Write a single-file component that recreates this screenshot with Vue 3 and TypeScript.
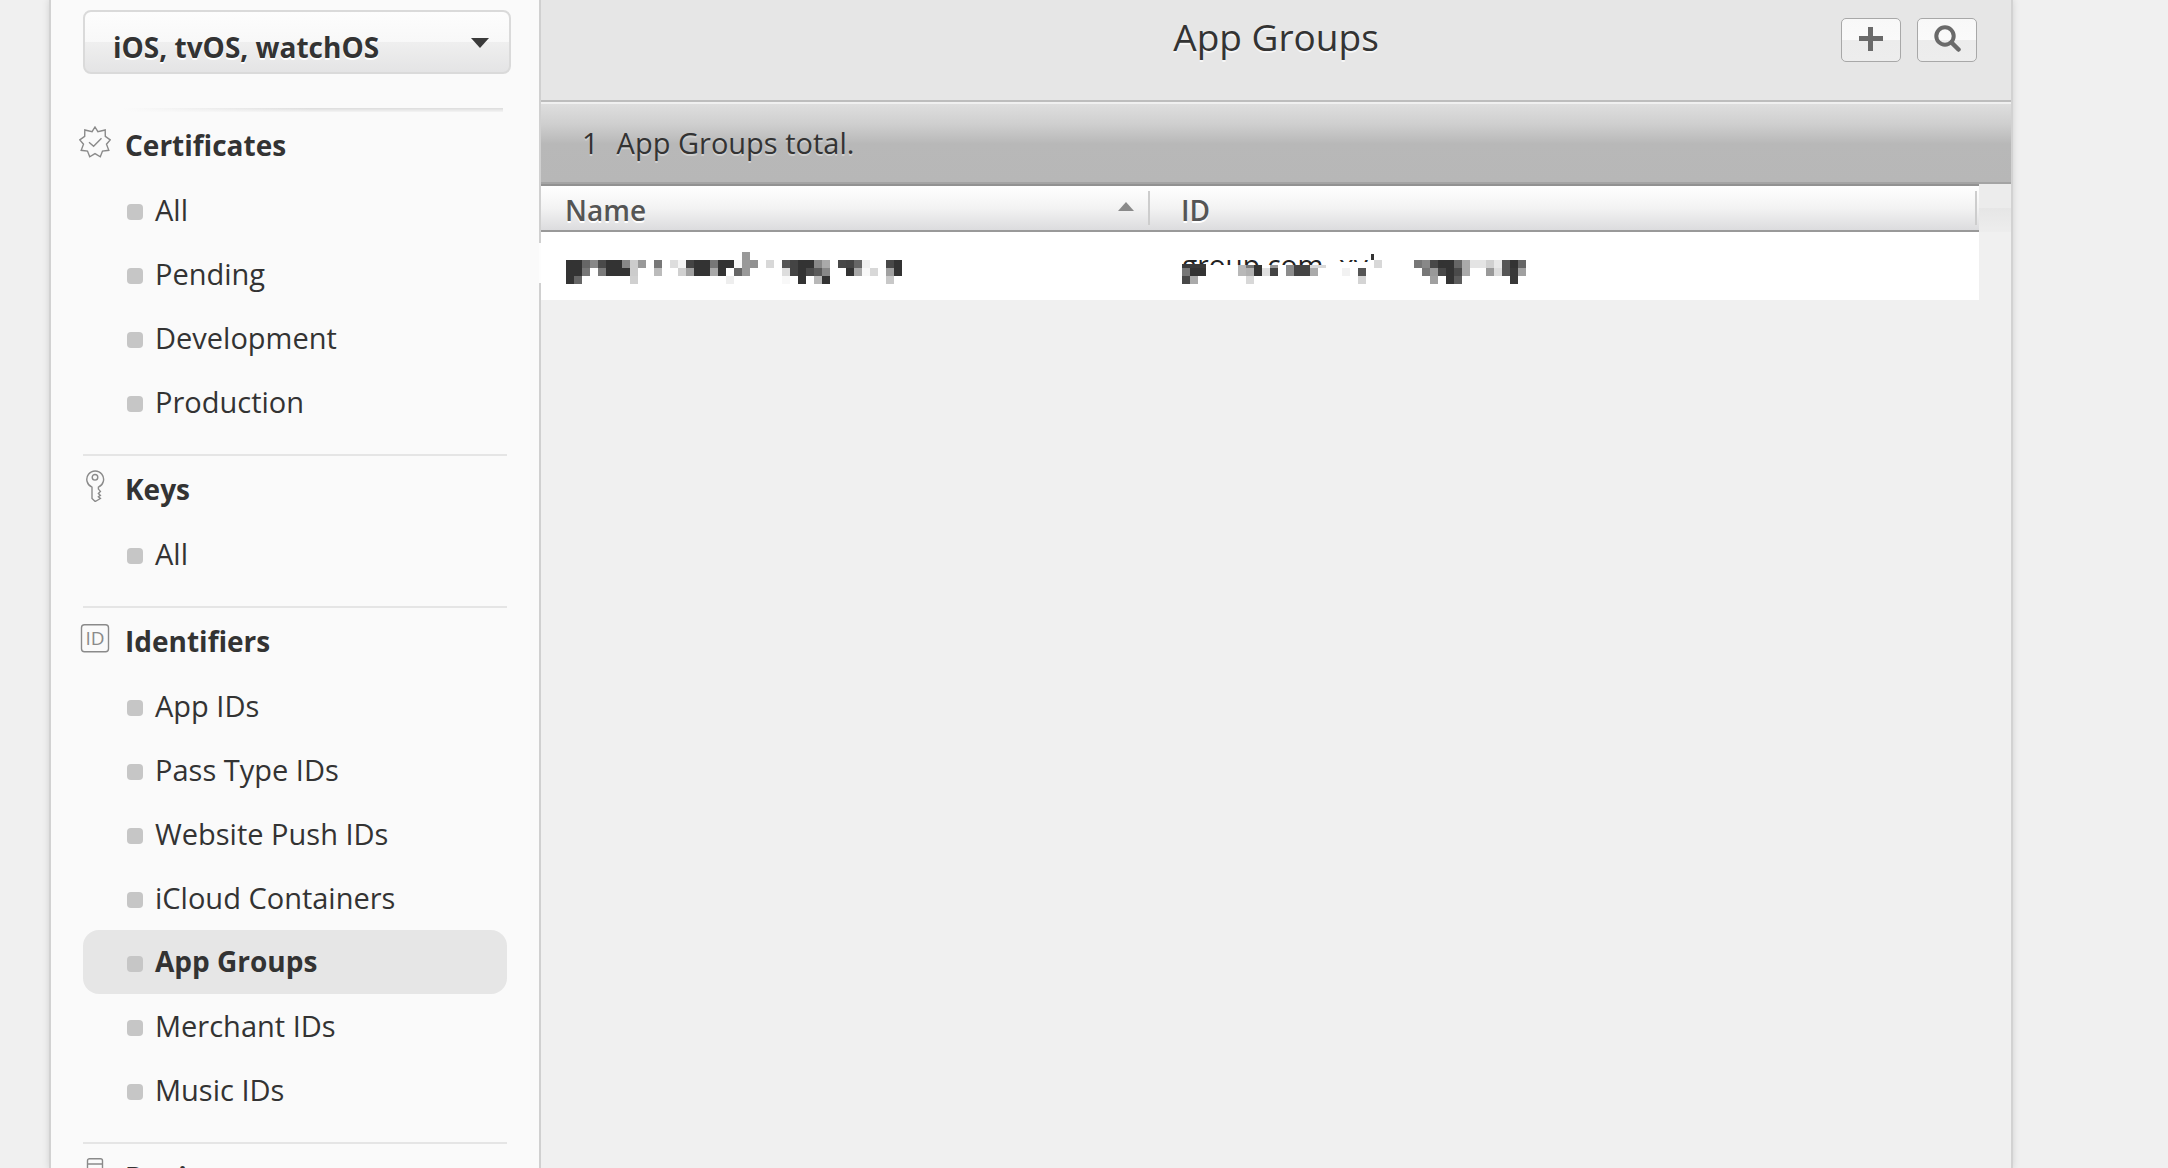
<script setup lang="ts">
import { ref } from 'vue'

type Icon = 'seal' | 'key' | 'id' | 'device'

interface Section {
  title: string
  icon: Icon
  items: string[]
}

interface Block {
  x: number
  y: number
  w: number
  h: number
  fill: string
}

const platform = ref('iOS, tvOS, watchOS')
const active = ref('Identifiers/App Groups')

const sections: Section[] = [
  { title: 'Certificates', icon: 'seal', items: ['All', 'Pending', 'Development', 'Production'] },
  { title: 'Keys', icon: 'key', items: ['All'] },
  {
    title: 'Identifiers',
    icon: 'id',
    items: [
      'App IDs',
      'Pass Type IDs',
      'Website Push IDs',
      'iCloud Containers',
      'App Groups',
      'Merchant IDs',
      'Music IDs',
    ],
  },
  { title: 'Devices', icon: 'device', items: ['All'] },
]

const CELL = 8

// Each row is a list of "column:shade" pairs; the shade is a two-digit grey level in hex.
function mosaic(rows: string[], left = 0): Block[] {
  return rows.flatMap((row, r) =>
    row
      .split(' ')
      .filter(Boolean)
      .map((pair) => {
        const [col, shade] = pair.split(':')
        return { x: left + Number(col) * CELL, y: r * CELL, w: CELL, h: CELL, fill: '#' + shade.repeat(3) }
      }),
  )
}

const nameBlocks = mosaic([
  '22:99',
  '0:33 1:33 2:66 3:88 4:4a 5:33 6:33 7:88 8:cc 9:99 11:77 13:dd 14:f5 15:44 16:33 17:33 18:77 19:33 20:33 21:f8 22:99 23:91 25:d8 27:55 28:44 29:33 30:33 31:88 32:aa 34:48 35:44 36:66 37:f0 40:48 41:33',
  '0:33 1:33 2:77 4:7a 5:33 6:33 7:33 8:cc 11:bb 14:d0 15:a0 16:33 17:33 18:a8 19:33 21:66 22:99 27:dd 28:44 29:33 30:4a 31:5a 32:88 35:33 36:a8 37:f8 38:d8 40:a0 41:33',
  '0:33 1:66 8:d0 20:ee 27:f8 29:33 31:b8 32:33 40:c8',
])

const idBlocks: Block[] = [
  { x: 0, y: 12, w: 24, h: 4, fill: '#3a3a3a' },
  { x: 0, y: 16, w: 8, h: 8, fill: '#777' },
  { x: 8, y: 16, w: 16, h: 8, fill: '#333' },
  { x: 0, y: 24, w: 8, h: 8, fill: '#484848' },
  { x: 8, y: 24, w: 8, h: 8, fill: '#aaa' },
  { x: 56, y: 13, w: 8, h: 11, fill: '#b8b8b8' },
  { x: 64, y: 13, w: 8, h: 3, fill: '#777' },
  { x: 64, y: 16, w: 8, h: 8, fill: '#b0b0b0' },
  { x: 72, y: 13, w: 8, h: 11, fill: '#333' },
  { x: 80, y: 16, w: 8, h: 8, fill: '#e0e0e0' },
  { x: 88, y: 13, w: 8, h: 3, fill: '#999' },
  { x: 88, y: 16, w: 8, h: 8, fill: '#444' },
  { x: 64, y: 24, w: 8, h: 8, fill: '#d8d8d8' },
  { x: 104, y: 13, w: 8, h: 11, fill: '#8c8c8c' },
  { x: 112, y: 13, w: 16, h: 11, fill: '#444' },
  { x: 128, y: 16, w: 8, h: 8, fill: '#aaa' },
  { x: 128, y: 13, w: 16, h: 3, fill: '#d8d8d8' },
  { x: 160, y: 16, w: 8, h: 8, fill: '#f2f2f2' },
  { x: 176, y: 16, w: 8, h: 8, fill: '#555' },
  { x: 176, y: 24, w: 8, h: 8, fill: '#d4d4d4' },
  { x: 189, y: 2, w: 3, h: 6, fill: '#333' },
  { x: 192, y: 8, w: 8, h: 8, fill: '#d8d8d8' },
  ...mosaic(
    [
      '',
      '0:77 1:88 2:48 3:33 4:33 5:66 6:aa 7:e4 8:e4 9:d0 10:e8 11:55 12:33 13:66',
      '1:77 2:99 3:48 4:33 5:4a 6:aa 9:99 10:dd 11:55 12:38 13:a0',
      '2:a0 4:33 5:5c 12:38',
    ],
    232,
  ),
]
</script>

<template>
  <div class="shell">
    <aside class="sidebar">
      <div class="picker">
        <select v-model="platform" aria-label="Platform">
          <option>iOS, tvOS, watchOS</option>
          <option>macOS</option>
        </select>
        <svg class="caret" width="18" height="10" viewBox="0 0 18 10" aria-hidden="true">
          <path d="M0 0h18L9 10z" fill="#3a3a3a" />
        </svg>
      </div>
      <div class="fade-rule"></div>

      <nav>
        <section v-for="s in sections" :key="s.title" class="group">
          <h2>
            <svg class="icon" width="32" height="32" viewBox="0 0 32 32" fill="none" stroke="#8a8a8a" stroke-width="1.4" aria-hidden="true">
              <template v-if="s.icon === 'seal'">
                <path d="M16 1l2.900 4.700 7.300-1.700.1 6.300 4.900 3.600-3.700 4.300 2.300 6.100-6.300.8-2.200 5.700L16 27.600l-5.300 3.200-2.200-5.700-6.300-.8 2.300-6.100L.8 13.900l4.900-3.600.1-6.300 7.300 1.700z" />
                <path d="M10 16.300l4.600 4 7.900-8" />
              </template>
              <template v-else-if="s.icon === 'key'">
                <path d="M13 17.100a8.400 8.400 0 1 1 6.400 0v2l2 2.300-2 2 2 2-2 1.400 2 1.700-5.200 3-3.200-3z" />
                <circle cx="16" cy="7.300" r="2.800" />
              </template>
              <template v-else-if="s.icon === 'id'">
                <rect x="2.500" y="2.700" width="27" height="27" rx="3" />
                <text x="16" y="23" text-anchor="middle" class="glyph">ID</text>
              </template>
              <template v-else>
                <rect x="8.500" y="0.700" width="15" height="30" rx="2" />
                <path d="M8.500 6h15M8.500 26h15" />
              </template>
            </svg>
            {{ s.title }}
          </h2>
          <ul>
            <li v-for="item in s.items" :key="item">
              <a
                href="#"
                :class="{ active: active === s.title + '/' + item }"
                @click.prevent="active = s.title + '/' + item"
                >{{ item }}</a
              >
            </li>
          </ul>
        </section>
      </nav>
      <span class="notch"></span>
    </aside>

    <main>
      <header>
        <h1>App Groups</h1>
        <div class="actions">
          <button type="button" aria-label="Add">
            <svg width="24" height="24" viewBox="0 0 24 24"><path d="M9 0h5v9h10v5H14v10H9V14H0V9h9z" fill="#6a6a6a" /></svg>
          </button>
          <button type="button" aria-label="Search">
            <svg width="28" height="28" viewBox="0 0 28 28" fill="none" stroke="#6a6a6a">
              <circle cx="12" cy="11" r="8.700" stroke-width="4" />
              <path d="M18.500 17.500l7 7" stroke-width="4.500" stroke-linecap="round" />
            </svg>
          </button>
        </div>
      </header>

      <p class="count"><span>1</span><span>App Groups total.</span></p>

      <div class="grid">
        <table>
          <thead>
            <tr>
              <th scope="col" aria-sort="ascending">
                <div class="head">
                  Name
                  <svg width="16" height="9" viewBox="0 0 16 9" aria-hidden="true"><path d="M8 0l8 9H0z" fill="#8a8a8a" /></svg>
                </div>
              </th>
              <th scope="col"><div class="head">ID</div></th>
            </tr>
          </thead>
          <tbody>
            <tr>
              <td>
                <svg width="336" height="32" shape-rendering="crispEdges" role="img" aria-label="Hidden name">
                  <rect v-for="(b, i) in nameBlocks" :key="i" :x="b.x" :y="b.y" :width="b.w" :height="b.h" :fill="b.fill" />
                </svg>
              </td>
              <td>
                <svg width="344" height="32" role="img" aria-label="Hidden identifier">
                  <clipPath id="sliver"><path d="M0 0h146v13H0zM146 0h42v10h-42z" /></clipPath>
                  <text x="0" y="23" class="masked" clip-path="url(#sliver)">group.com<tspan x="157">xy</tspan></text>
                  <g shape-rendering="crispEdges">
                    <rect v-for="(b, i) in idBlocks" :key="i" :x="b.x" :y="b.y" :width="b.w" :height="b.h" :fill="b.fill" />
                  </g>
                </svg>
              </td>
            </tr>
          </tbody>
        </table>
        <div class="gutter"></div>
      </div>
    </main>
  </div>
</template>

<style>
body {
  background: #f0f0f0;
}
</style>

<style scoped>
.shell {
  display: flex;
  height: 100vh;
  margin: 0 157px 0 51px;
  overflow: clip;
  overflow-clip-margin: 10px;
  background: #f0f0f0;
  box-shadow: 0 0 0 2px #d2d2d2, 0 0 8px 1px rgba(0, 0, 0, 0.16);
  font-family: 'Open Sans', 'Noto Sans', sans-serif;
  font-size: 29px;
  color: #333;
}

h1,
h2,
p,
ul {
  margin: 0;
  padding: 0;
  list-style: none;
}

/* Sidebar */
.sidebar {
  position: relative;
  flex: none;
  box-sizing: border-box;
  width: 490px;
  padding: 10px 32px 0;
  border-right: 2px solid #d0d0d0;
  background: #fafafa;
}

.picker {
  position: relative;
  margin-right: -4px;
}

.picker select {
  display: block;
  box-sizing: border-box;
  width: 100%;
  height: 64px;
  padding: 10px 60px 0 28px;
  appearance: none;
  border: 2px solid #dadada;
  border-radius: 8px;
  background: linear-gradient(#fdfdfd, #f8f8f8 50%, #efefef 50%, #e4e4e5);
  color: #333;
  font: 700 28px/48px 'Open Sans', 'Noto Sans', sans-serif;
  text-shadow: 0 2px 0 #fff;
}

.caret {
  position: absolute;
  top: 28px;
  right: 22px;
}

.fade-rule {
  height: 4px;
  margin: 34px 4px 0 40px;
  background: linear-gradient(to right, #fafafa, rgba(250, 250, 250, 0) 50%), linear-gradient(#dcdcdc, #f4f4f4);
}

.group + .group {
  margin-top: 20px;
  border-top: 2px solid #e5e5e5;
}

.group h2 {
  display: flex;
  align-items: center;
  gap: 14px;
  height: 66px;
  margin-left: -4px;
  font-size: 28px;
  font-weight: 700;
  line-height: 66px;
}

.icon {
  flex: none;
  margin-bottom: 6px;
}

.glyph {
  fill: #8a8a8a;
  stroke: none;
  font: 19px 'Open Sans', sans-serif;
}

.group a {
  display: flex;
  align-items: center;
  gap: 12px;
  box-sizing: border-box;
  height: 64px;
  padding: 0 44px 2px;
  border-radius: 16px;
  color: inherit;
  text-decoration: none;
}

.group a::before {
  content: '';
  width: 16px;
  height: 16px;
  margin-top: 6px;
  border-radius: 4px;
  background: #c6c6c6;
}

.group a.active {
  background: #e6e6e6;
  font-size: 28px;
  font-weight: 700;
}

.notch {
  position: absolute;
  top: 243px;
  right: -2px;
  width: 2px;
  height: 40px;
  background: #fdfdfd;
}

/* Content */
main {
  flex: 1;
  min-width: 0;
}

header {
  display: grid;
  grid-template-columns: 1fr auto 1fr;
  align-items: start;
  box-sizing: border-box;
  height: 102px;
  padding: 18px 34px 0;
  border-bottom: 2px solid #bdbdbd;
  background: #e6e6e6;
}

h1 {
  grid-column: 2;
  font-size: 37px;
  font-weight: 400;
  line-height: 38px;
  text-shadow: 0 2px 0 #f6f6f6;
}

.actions {
  display: flex;
  justify-content: flex-end;
  gap: 16px;
}

.actions button {
  display: flex;
  align-items: center;
  justify-content: center;
  width: 60px;
  height: 44px;
  padding: 0 0 2px;
  border: 1px solid #a8a8a8;
  border-radius: 5px;
  background: linear-gradient(#f8f8f8, #fafafa 50%, #ececec 50%, #ededed);
}

.count {
  display: flex;
  gap: 18px;
  box-sizing: border-box;
  height: 82px;
  padding-left: 41px;
  border-top: 2px solid #f0f0f0;
  border-bottom: 2px solid #a4a4a4;
  background: linear-gradient(#dedede, #cfcfcf 20px, #b8b8b8 40px, #b7b7b7);
  line-height: 78px;
  text-shadow: 0 2px 0 #d0d0d0;
}

.grid {
  display: flex;
  align-items: flex-start;
}

table {
  flex: 1;
  table-layout: fixed;
  border-spacing: 0;
  background: #fff;
}

th {
  padding: 0;
  border-top: 2px solid #929292;
  border-bottom: 2px solid #999;
  background: linear-gradient(#fff, #f3f3f3 50%, #dcdcde);
  color: #555;
  font-size: 28px;
  font-weight: 600;
  text-align: left;
}

th:first-child {
  width: 609px;
}

th:last-child {
  width: auto;
}

.head {
  display: flex;
  align-items: center;
  justify-content: space-between;
  box-sizing: border-box;
  height: 34px;
  margin: 5px 0;
  padding: 4px 14px 0 24px;
  border-right: 2px solid #cdcdcd;
  line-height: 30px;
  text-shadow: 0 2px 0 #fff;
}

.head svg {
  margin-bottom: 8px;
}

th:last-child .head {
  margin-right: 2px;
  padding-left: 31px;
}

td {
  height: 48px;
  padding: 20px 0 0 25px;
  vertical-align: top;
}

td:last-child {
  padding-left: 32px;
}

td svg {
  display: block;
}

.masked {
  fill: #222;
  font-size: 28px;
}

.gutter {
  width: 32px;
  height: 48px;
  background: linear-gradient(#ececec 50%, #e6e6e6 50%, #ededed);
}
</style>
